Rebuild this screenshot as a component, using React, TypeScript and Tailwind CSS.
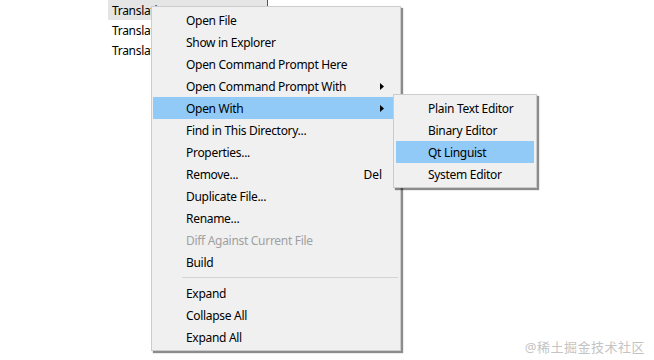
import { ReactNode } from 'react';

type Item =
  | { kind: 'item'; label: string; active?: boolean; disabled?: boolean; submenu?: boolean; shortcut?: string }
  | { kind: 'sep' };

const mainItems: Item[] = [
  { kind: 'item', label: 'Open File' },
  { kind: 'item', label: 'Show in Explorer' },
  { kind: 'item', label: 'Open Command Prompt Here' },
  { kind: 'item', label: 'Open Command Prompt With', submenu: true },
  { kind: 'item', label: 'Open With', submenu: true, active: true },
  { kind: 'item', label: 'Find in This Directory...' },
  { kind: 'item', label: 'Properties...' },
  { kind: 'item', label: 'Remove...', shortcut: 'Del' },
  { kind: 'item', label: 'Duplicate File...' },
  { kind: 'item', label: 'Rename...' },
  { kind: 'item', label: 'Diff Against Current File', disabled: true },
  { kind: 'item', label: 'Build' },
  { kind: 'sep' },
  { kind: 'item', label: 'Expand' },
  { kind: 'item', label: 'Collapse All' },
  { kind: 'item', label: 'Expand All' },
];

const openWithItems = ['Plain Text Editor', 'Binary Editor', 'Qt Linguist', 'System Editor'];

function Arrow() {
  return (
    <svg width="4" height="7" viewBox="0 0 4 7" className="block">
      <path d="M0 0 L4 3.5 L0 7 Z" fill="#000" />
    </svg>
  );
}

function MenuRow({ item }: { item: Item }): ReactNode {
  if (item.kind === 'sep') {
    return (
      <div className="h-[9px] flex items-center pl-[30px] pr-[2px]">
        <div className="h-px w-full bg-[#d4d4d4]" />
      </div>
    );
  }
  return (
    <div
      className={`mx-[1px] h-[22px] flex items-center pl-[33px] pr-[15px] ${item.active ? 'bg-[#91c9f7]' : ''} ${
        item.disabled ? 'text-[#a0a0a0]' : 'text-black'
      }`}
    >
      <span className="flex-1 whitespace-nowrap pt-[2px] tracking-[-0.3px]">{item.label}</span>
      {item.shortcut && <span className="pr-[2px] pt-[2px]">{item.shortcut}</span>}
      {item.submenu && <Arrow />}
    </div>
  );
}

export default function App() {
  return (
    <div
      className="relative w-[654px] h-[360px] bg-white overflow-hidden text-[12px] leading-none"
      style={{ fontFamily: '"Noto Sans", "Noto Sans CJK SC", sans-serif' }}
    >
      {/* file tree behind the popup */}
      <div className="pl-[108px]">
        <div className="w-[160px] border-r border-[#555]">
          {['Translations', 'Translations', 'Translations'].map((t, i) => (
            <div
              key={i}
              className={`h-[20px] flex items-center pl-[4px] pt-[1px] tracking-[-0.3px] ${i === 0 ? 'bg-[#e5e5e5]' : ''}`}
            >
              {t}
            </div>
          ))}
        </div>
      </div>

      {/* context menu */}
      <div className="absolute left-[151px] top-[6px] w-[250px] bg-[#f0f0f0] border border-[#cccccc] py-[2px] shadow-[2px_2px_1px_rgba(0,0,0,0.45)]">
        {mainItems.map((it, i) => (
          <MenuRow key={i} item={it} />
        ))}
      </div>

      {/* Open With submenu */}
      <div className="absolute left-[393px] top-[94px] w-[144px] bg-[#f0f0f0] border border-[#cccccc] py-[2px] shadow-[2px_2px_1px_rgba(0,0,0,0.45)]">
        {openWithItems.map((label) => (
          <div
            key={label}
            className={`mx-[2px] h-[22px] flex items-center pl-[32px] pt-[2px] whitespace-nowrap tracking-[-0.3px] ${
              label === 'Qt Linguist' ? 'bg-[#91c9f7]' : ''
            }`}
          >
            {label}
          </div>
        ))}
      </div>

      <div className="absolute right-[9px] bottom-[6px] text-[13px] text-[#c4c4c4] tracking-[0.5px]">@稀土掘金技术社区</div>
    </div>
  );
}
